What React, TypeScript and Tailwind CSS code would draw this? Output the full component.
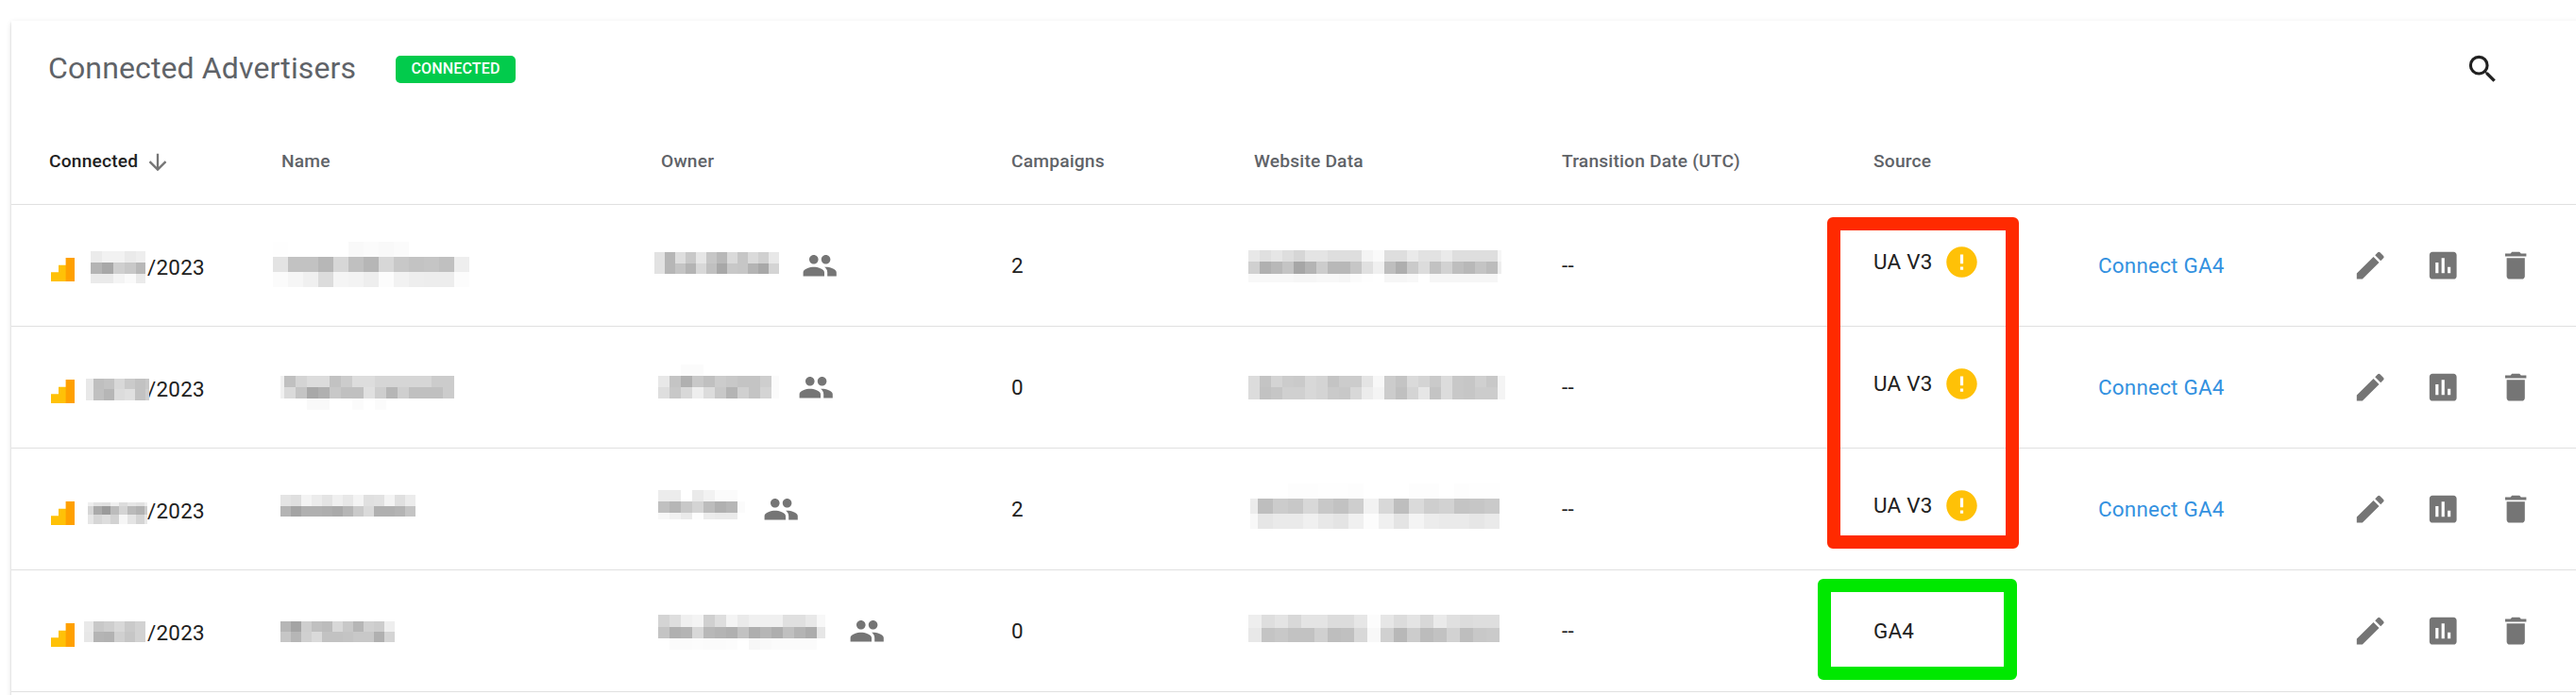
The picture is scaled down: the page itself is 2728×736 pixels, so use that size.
import type { ReactNode } from "react";
import {
  MdArrowDownward,
  MdAssessment,
  MdCreate,
  MdDelete,
  MdError,
  MdPeople,
  MdSearch,
} from "react-icons/md";

/** A censored patch: column widths, band heights and one hex byte of grey per tile. */
type Patch = { x: number; y: number; cols: number[]; bands: [number, string][] };

type Advertiser = {
  date: Patch;
  name: Patch;
  owner: Patch;
  ownerWidth: number;
  campaigns: number;
  site: Patch;
  legacy: boolean;
};

const rep = (n: number, w: number): number[] => Array.from({ length: n }, () => w);

const advertisers: Advertiser[] = [
  {
    date: {
      x: 17, y: 49, cols: [12, 12, 12, 12, 10],
      bands: [[12, "eb f2 f2 ea ee"], [12, "b4 a8 cf c8 b8"], [10, "ea ea f4 fa ea"]],
    },
    name: {
      x: -9, y: 39, cols: rep(13, 16),
      bands: [
        [16, "fe ff ff ff ff f9 fb f9 fb ff ff ff ff"],
        [16, "e3 c2 c2 b7 d7 c0 b6 d7 c8 c3 c5 c0 ee"],
        [16, "fb f6 f0 dc f5 f3 ee fc f2 ee ed ed fc"],
      ],
    },
    owner: {
      x: -7, y: 50, cols: rep(12, 11),
      bands: [[12, "e2 b6 de c8 e6 c6 b8 da c6 da d0 e8"], [11, "e2 b6 c4 b4 d8 c0 a8 c8 c6 b4 a8 d4"]],
    },
    ownerWidth: 149,
    campaigns: 2,
    site: {
      x: -6, y: 48, cols: [...rep(22, 12), 4],
      bands: [
        [12, "e8 e0 e6 de d6 e4 e4 de de de f4 fa de de ea e2 e2 ea de de de de f6"],
        [13, "d0 b0 b8 c4 a6 b4 cc b8 b8 c6 e0 f0 be ae ca dc c2 d2 be b8 c4 bc ee"],
        [9, "f8 f8 f8 f8 f6 f6 f8 f8 f6 fb fe ff f6 f6 f8 ff f6 f6 f6 f6 f6 f6 ff"],
      ],
    },
    legacy: true,
  },
  {
    date: {
      x: 12, y: 55, cols: [8, 11, 11, 11, 11, 11, 4],
      bands: [[11, "e8 bf c3 d8 ca c2 c8"], [12, "e8 c0 b6 dc e0 c2 cf"]],
    },
    name: {
      x: -1, y: 52, cols: [4, ...rep(15, 12)],
      bands: [
        [12, "f0 c0 d4 dc dc c2 cc dd dd d6 d6 d6 d6 d6 cc cc"],
        [12, "f0 da c4 a8 b0 c8 c0 c0 e0 ce b6 cf c0 c0 c0 cc"],
        [12, "ff ff ff f9 f9 ff ff fb ff fb ff ff ff ff ff ff"],
      ],
    },
    owner: {
      x: -3, y: 40, cols: [...rep(10, 12), 8],
      bands: [
        [12, "ff ff fb fb ff ff ff ff ff ff ff"],
        [12, "e8 c4 b0 c8 c0 cc c8 c4 c4 ce fb"],
        [12, "de c8 d8 ee dc c8 b4 d0 c4 d4 fb"],
      ],
    },
    ownerWidth: 145,
    campaigns: 0,
    site: {
      x: -6, y: 52, cols: [...rep(22, 12), 8],
      bands: [
        [12, "dc c4 d4 cc ca d8 d4 c4 cc cc e4 f8 cc c4 da d4 ca dc c8 c6 d0 c8 f4"],
        [13, "dc c2 c6 d0 d0 d8 d4 ca c8 d8 ec f4 cc c0 d4 e6 c4 dc c8 c6 cc cc f4"],
      ],
    },
    legacy: true,
  },
  {
    date: {
      x: 14, y: 57, cols: [6, 9, 9, 9, 9, 9, 9, 3],
      bands: [[4, "ee e2 e0 f0 dd e6 e2 ee"], [9, "d6 aa 9a bc d4 ba b2 cc"], [10, "e6 d6 dd d2 f6 e4 d4 e8"]],
    },
    name: {
      x: -1, y: 49, cols: rep(13, 11),
      bands: [[12, "e4 df f4 ec e4 f0 e8 f4 e0 e2 f4 e0 ec"], [11, "b4 a4 b0 b0 ae aa b6 ca da b0 b0 b4 c4"]],
    },
    owner: {
      x: -3, y: 44, cols: [...rep(7, 12), 8],
      bands: [[12, "ec ec ff ea f2 fb fb ff"], [12, "c0 b6 c8 d4 bc b0 b6 fb"], [7, "f8 f2 ea fd ec ea ea ff"]],
    },
    ownerWidth: 108,
    campaigns: 2,
    site: {
      x: -4, y: 37, cols: [8, ...rep(16, 16)],
      bands: [
        [16, "ff ff ff fd fd fe fe fd ff ff ff fd fd ff fd fe fe"],
        [16, "ec be cc c8 d8 c8 c2 ce f2 d8 be da ce d2 c4 c6 ca"],
        [16, "f8 e6 ea ea f0 e8 e4 f0 fc f0 e4 f4 ec ea ea e6 ea"],
      ],
    },
    legacy: true,
  },
  {
    date: {
      x: 10, y: 54, cols: [10, 11, 11, 11, 11, 11],
      bands: [[11, "e9 c8 ce d8 ca d2"], [11, "e7 b4 b2 d0 c6 d2"]],
    },
    name: {
      x: -1, y: 54, cols: rep(11, 11),
      bands: [[11, "b6 a4 ce c0 bc d8 c8 b6 d0 cc ee"], [11, "c6 b6 d0 da c2 c2 c4 c8 c8 b0 d4"]],
    },
    owner: {
      x: -3, y: 47, cols: [...rep(14, 12), 9],
      bands: [
        [13, "d4 de f0 f4 d0 de f4 ea f0 f0 f0 e0 e0 e8 f8"],
        [12, "c4 b0 b4 d8 b8 b4 b0 c2 ae b6 ae c0 b4 ac e6"],
        [12, "ff fb fb fc fb fb fc ff f7 f9 fb fb fb fb ff"],
      ],
    },
    ownerWidth: 199,
    campaigns: 0,
    site: {
      x: -6, y: 47, cols: rep(19, 14),
      bands: [
        [14, "ee de e4 d8 e4 e4 dc dc e6 fc e6 dc e4 d8 ea e0 dc de de"],
        [15, "e8 c4 c8 c2 c2 d0 be c0 d8 f8 d0 b8 cc bc c2 d2 be c8 ca"],
      ],
    },
    legacy: false,
  },
];

function Redacted({ patch }: { patch: Patch }) {
  return (
    <div className="z-10 shrink-0 self-start" style={{ marginLeft: patch.x, marginTop: patch.y }}>
      {patch.bands.map(([height, tones], b) => (
        <div key={b} className="flex" style={{ height }}>
          {tones.split(" ").map((t, i) => (
            <span key={i} className="shrink-0" style={{ width: patch.cols[i], backgroundColor: `#${t}${t}${t}` }} />
          ))}
        </div>
      ))}
    </div>
  );
}

function AnalyticsIcon() {
  return (
    <svg className="ml-[2px] mt-[9px] h-[25px] w-[25px] shrink-0" viewBox="0 0 25 25">
      <path d="M0 15.3h8V7.7h8V25H0z" fill="#ffc107" />
      <path d="M15.6 0H25v25h-9.4z" fill="#ffa000" />
    </svg>
  );
}

const widths = [
  "w-[246px]",
  "w-[402px]",
  "w-[371px]",
  "w-[257px]",
  "w-[326px]",
  "w-[330px]",
  "w-[238px]",
  "w-[269px]",
];

function Cell({ col, children }: { col: number; children?: ReactNode }) {
  return <div className={`flex h-full shrink-0 items-center ${widths[col]}`}>{children}</div>;
}

const headings = ["Name", "Owner", "Campaigns", "Website Data", "Transition Date (UTC)", "Source"];

export default function App() {
  return (
    <div className="relative h-[736px] w-full overflow-hidden bg-white pl-3 pt-[22px] font-['Roboto',sans-serif] text-[#212121]">
      <section className="h-[760px] w-[2800px] bg-white shadow-[0_4px_2px_-2px_rgba(0,0,0,0.2),0_2px_2px_rgba(0,0,0,0.14),0_2px_6px_rgba(0,0,0,0.12)]">
        <header className="flex h-[103px] items-center pb-[3px] pl-[39px]">
          <h1 className="w-[368px] text-[32px] leading-none tracking-[0.004em] text-[#5f6368]">Connected Advertisers</h1>
          <span className="mt-[3px] flex h-[29px] w-[127px] items-center justify-center rounded-[5px] bg-[#02cb4c] pb-px text-[16px] font-medium tracking-[0.01em] text-white">
            CONNECTED
          </span>
          <MdSearch className="ml-[2064px] mt-[3px] h-[38.4px] w-[38.4px]" />
        </header>

        <div className="flex h-[92px] items-center border-b border-[#e0e0e0] pl-10 pt-[2px] text-[19.2px] font-medium tracking-[0.01em] text-[#5f6368]">
          <Cell col={0}>
            <span className="text-[#212121]">Connected</span>
            <MdArrowDownward className="ml-[7px] h-7 w-7 text-[#757575]" />
          </Cell>
          {headings.map((h, i) => (
            <Cell key={h} col={i + 1}>
              {h}
            </Cell>
          ))}
        </div>

        {advertisers.map((a, i) => (
          <div key={i} className="flex h-[129px] items-center border-b border-[#e0e0e0] pl-10 text-[22.4px] tracking-[0.01071em]">
            <Cell col={0}>
              <AnalyticsIcon />
              <div className="flex h-full w-[77px] shrink-0">
                <Redacted patch={a.date} />
              </div>
              <span className="pt-[5px]">/2023</span>
            </Cell>
            <Cell col={1}>
              <Redacted patch={a.name} />
            </Cell>
            <Cell col={2}>
              <div className="flex h-full shrink-0" style={{ width: a.ownerWidth }}>
                <Redacted patch={a.owner} />
              </div>
              <MdPeople className="h-[38.4px] w-[38.4px] shrink-0 text-[#757575]" />
            </Cell>
            <Cell col={3}>
              <span className="pt-px">{a.campaigns}</span>
            </Cell>
            <Cell col={4}>
              <Redacted patch={a.site} />
            </Cell>
            <Cell col={5}>
              <span className="pt-px">--</span>
            </Cell>
            <Cell col={6}>
              {a.legacy ? (
                <div className="flex items-center gap-[12px] pb-[7px]">
                  <span className="pt-px">UA V3</span>
                  <MdError className="h-[39px] w-[39px] text-[#ffc107]" />
                </div>
              ) : (
                <span className="pt-px">GA4</span>
              )}
            </Cell>
            <Cell col={7}>{a.legacy && <a className="pt-px text-[#3391e0]">Connect GA4</a>}</Cell>
            <div className="flex gap-[38.4px] text-[#757575]">
              <MdCreate className="h-[38.4px] w-[38.4px]" />
              <MdAssessment className="h-[38.4px] w-[38.4px]" />
              <MdDelete className="h-[38.4px] w-[38.4px]" />
            </div>
          </div>
        ))}
      </section>

      <div className="absolute left-[1935px] top-[230px] z-20 h-[351px] w-[203px] rounded-[6px] border-[14px] border-[#ff2a00]" />
      <div className="absolute left-[1925px] top-[613px] z-20 h-[107px] w-[211px] rounded-[6px] border-[14px] border-[#00e800]" />
    </div>
  );
}
